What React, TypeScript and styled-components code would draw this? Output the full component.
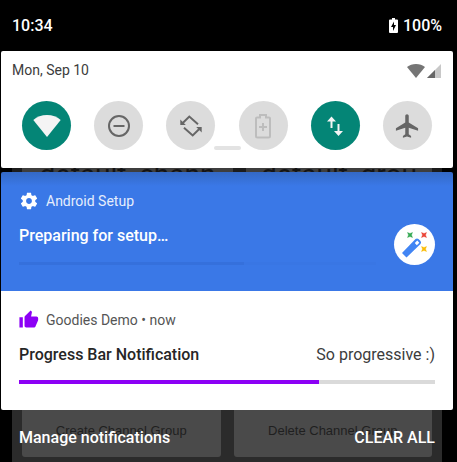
import React from 'react';
import styled, { createGlobalStyle } from 'styled-components';

const GlobalStyle = createGlobalStyle`
  * { box-sizing: border-box; }
  body {
    margin: 0;
    background: #000;
    font-family: Roboto, "Liberation Sans", sans-serif;
  }
  button { font: inherit; border: 0; padding: 0; margin: 0; cursor: pointer; }
  svg { display: block; flex: none; }
`;

const Screen = styled.main`
  display: flex;
  flex-direction: column;
  min-height: 100vh;
  background: #000;
  overflow: hidden;
`;

const StatusBar = styled.header`
  display: flex;
  align-items: center;
  justify-content: space-between;
  height: 51px;
  padding: 0 15px 0 12px;
  color: #fff;
  font-size: 16px;
  font-weight: 500;
  line-height: 20px;
`;

const Battery = styled.div`
  display: flex;
  align-items: center;
  gap: 5px;
`;

const QuickSettings = styled.section`
  position: relative;
  margin: 0 4px 0 1px;
  padding: 10px 21px 18px;
  border-radius: 2px;
  background: #fff;
`;

const DateRow = styled.div`
  display: flex;
  align-items: center;
  justify-content: space-between;
  margin: 0 -9px 22px -10px;
  color: #3c3c3c;
  font-size: 14px;
  line-height: 18px;
`;

const Signals = styled.div`
  display: flex;
  align-items: center;
  gap: 2px;
  padding-top: 2px;
`;

const Tiles = styled.div`
  display: flex;
  justify-content: space-between;
`;

const Tile = styled.button<{ $on?: boolean; $dim?: boolean }>`
  display: flex;
  align-items: center;
  justify-content: center;
  width: 49px;
  height: 49px;
  border-radius: 50%;
  background: ${(p) => (p.$on ? '#048576' : '#dcdcdc')};
  color: ${(p) => (p.$on ? '#f4f4f4' : p.$dim ? '#bdbdbd' : '#666')};
`;

const Handle = styled.div`
  position: absolute;
  left: 50%;
  bottom: 18px;
  width: 27px;
  height: 4px;
  margin-left: -13px;
  border-radius: 2px;
  background: #e3e3e3;
`;

const Backdrop = styled.div`
  display: grid;
  grid-template-columns: 1fr 1fr;
  gap: 13px;
  margin: 0 15px 0 12px;
  padding: 0 10px;
  background: #2b2b2b;
`;

const PeekBackdrop = styled(Backdrop)`
  grid-template-columns: 17fr 15fr;
  height: 4px;
  overflow: hidden;
  background: #1c1c1c;
`;

const PeekLabel = styled.div`
  height: 34px;
  margin-top: -10px;
  background: #3e3e3e;
  color: #141414;
  font-size: 28px;
  line-height: 34px;
  text-align: center;
  white-space: nowrap;
`;

const Notifications = styled.div`
  margin: 0 4px 0 1px;
  border-radius: 2px;
  overflow: hidden;
`;

const SetupCard = styled.section`
  display: flex;
  justify-content: space-between;
  gap: 18px;
  height: 119px;
  padding: 19px 18px 0;
  background: linear-gradient(#3469c5, #3a78e7 14px);
  color: #fff;
`;

const SetupBody = styled.div`
  flex: 1;
  min-width: 0;
`;

const AppLine = styled.div<{ $light?: boolean }>`
  display: flex;
  align-items: center;
  gap: 7px;
  color: ${(p) => (p.$light ? '#e6eefc' : '#555')};
  font-size: 14px;
  line-height: 20px;
`;

const Title = styled.h2`
  margin: 0;
  font-size: 16px;
  font-weight: 500;
  line-height: 20px;
`;

const SetupTitle = styled(Title)`
  margin: 15px 0 16px;
`;

const SetupTrack = styled.div`
  height: 3px;
  background: #3976e4;
`;

const SetupFill = styled.div`
  width: 63%;
  height: 3px;
  background: #3570dc;
`;

const WandBadge = styled.div`
  width: 41px;
  height: 41px;
  margin-top: 33px;
  border-radius: 50%;
  background: #fff;
`;

const ProgressCard = styled.section`
  height: 119px;
  padding: 19px 18px 0;
  background: #fff;
`;

const TitleRow = styled.div`
  display: flex;
  justify-content: space-between;
  margin: 15px 0;
  color: #262626;
`;

const Detail = styled.span`
  color: #3c3c3c;
  font-size: 16px;
  line-height: 20px;
`;

const Progress = styled.div`
  height: 4px;
  background: #dadada;
`;

const ProgressFill = styled.div`
  height: 4px;
  background: #8c00f5;
`;

const Footer = styled.footer`
  position: relative;
  flex: 1;
  display: flex;
  flex-direction: column;
`;

const FooterBackdrop = styled(Backdrop)`
  flex: 1;
  align-items: start;
`;

const BackdropButton = styled.button`
  height: 47px;
  padding-bottom: 6px;
  border-radius: 0 0 3px 3px;
  background: #4a4a4a;
  color: #1f1f1f;
  font-family: "Liberation Sans", Arial, sans-serif;
  font-size: 13px;
`;

const FooterActions = styled.div`
  position: absolute;
  top: 18px;
  left: 19px;
  right: 22px;
  display: flex;
  justify-content: space-between;
`;

const FooterAction = styled.button`
  background: none;
  color: #fff;
  font-size: 16px;
  font-weight: 500;
  line-height: 20px;
`;

const WifiIcon = () => (
  <svg width="28" height="22" viewBox="0 0 28 22" fill="currentColor">
    <path d="M14 22 0.3 4.9C4 1.9 8.700 0 14 0s10 1.900 13.700 4.900z" />
  </svg>
);

const DoNotDisturbIcon = () => (
  <svg width="24" height="24" viewBox="0 0 24 24" fill="none" stroke="currentColor" strokeWidth="2">
    <circle cx="12" cy="12" r="10" />
    <path d="M6.500 12h11" />
  </svg>
);

const RotateIcon = () => (
  <svg width="24" height="24" viewBox="0 0 24 24" fill="none" stroke="currentColor" strokeWidth="2">
    <path d="m19 10.300-8.700-7.700-6.300 6.200M5 13.700l8.700 7.700 6.300-6.200" />
    <path d="M1.300 5.500v5.500h5.500zM22.700 18.500v-5.500h-5.500z" fill="currentColor" stroke="none" />
  </svg>
);

const BatterySaverIcon = () => (
  <svg width="16" height="26" viewBox="0 0 16 26" fill="none" stroke="currentColor" strokeWidth="2">
    <path d="M2 4.500h3V2h6v2.500h3q1 0 1 1V23q0 1.500-1.500 1.500h-11Q1 24.500 1 23V5.500q0-1 1-1z" />
    <path d="M8 10v8M4 14h8" />
  </svg>
);

const DataIcon = () => (
  <svg width="18" height="22" viewBox="0 0 18 22" fill="none" stroke="currentColor" strokeWidth="2">
    <path d="M5.500 13V4M12.500 9v9" />
    <path d="M1 6.500 5.500 1.500 10 6.500zM8 16l4.500 5 4.500-5z" fill="currentColor" stroke="none" />
  </svg>
);

const PlaneIcon = () => (
  <svg width="28" height="28" viewBox="-0.500 0 24 24" fill="currentColor">
    <path d="M21 16v-2l-8-5V3.500c0-.83-.67-1.500-1.500-1.500S10 2.670 10 3.500V9l-8 5v2l8-2.500V19l-2 1.500V22l3.500-1 3.500 1v-1.500L13 19v-5.500l8 2.500z" />
  </svg>
);

const SmallWifiIcon = () => (
  <svg width="18" height="14" viewBox="0 0 18 14" fill="#757575">
    <path d="M9 14 0 3c2.500-2 5.500-3 9-3s6.500 1 9 3z" />
  </svg>
);

const CellIcon = () => (
  <svg width="14" height="14" viewBox="0 0 14 14">
    <path d="M0 14 14 0v14z" fill="#c8c8c8" />
    <path d="M0 14 8 6v8z" fill="#666" />
  </svg>
);

const ChargingIcon = () => (
  <svg width="9" height="15" viewBox="0 0 9 15">
    <path d="M3 0h3v1.500h2q1 0 1 1V14q0 1-1 1H1q-1 0-1-1V2.500q0-1 1-1h2z" fill="#fff" />
    <path d="M5 3.500 2 9h2v4l3-6H5z" fill="#000" />
  </svg>
);

const GearIcon = () => (
  <svg width="20" height="20" viewBox="0 0 24 24" fill="#fff">
    <path d="M19.430 12.980c.04-.32.07-.64.07-.98s-.03-.66-.07-.98l2.110-1.650c.19-.15.24-.42.12-.64l-2-3.460c-.12-.22-.39-.3-.61-.22l-2.490 1c-.52-.4-1.080-.73-1.690-.98l-.38-2.650C14.460 2.180 14.250 2 14 2h-4c-.25 0-.46.18-.49.42l-.38 2.650c-.61.25-1.170.59-1.690.98l-2.490-1c-.23-.09-.49 0-.61.22l-2 3.460c-.13.22-.07.49.12.64l2.110 1.650c-.04.32-.07.65-.07.98s.03.66.07.98l-2.110 1.650c-.19.15-.24.42-.12.64l2 3.460c.12.22.39.3.61.22l2.490-1c.52.4 1.080.73 1.690.98l.38 2.650c.03.24.24.42.49.42h4c.25 0 .46-.18.49-.42l.38-2.650c.61-.25 1.170-.59 1.690-.98l2.490 1c.23.09.49 0 .61-.22l2-3.460c.12-.22.07-.49-.12-.64l-2.110-1.650zM12 15.500c-1.930 0-3.500-1.570-3.500-3.500s1.570-3.500 3.500-3.500 3.500 1.570 3.500 3.500-1.570 3.500-3.500 3.500z" />
  </svg>
);

const ThumbIcon = () => (
  <svg width="20" height="20" viewBox="0.500 0.500 23.500 23.500" fill="#8c00f5">
    <path d="M1 21h4V9H1v12zm22-11c0-1.100-.9-2-2-2h-6.310l.95-4.570.03-.32c0-.41-.17-.79-.44-1.060L14.170 1 7.590 7.590C7.220 7.950 7 8.450 7 9v10c0 1.100.9 2 2 2h9c.83 0 1.540-.5 1.840-1.220l3.020-7.050c.09-.23.14-.47.14-.73v-2z" />
  </svg>
);

const Spark = ({ x, y, color }: { x: number; y: number; color: string }) => (
  <path
    d={`M${x - 2.5} ${y - 2.5}l2.500 1 2.500-1-1 2.500 1 2.500-2.500-1-2.500 1 1-2.500z`}
    fill={color}
    stroke={color}
    strokeWidth="0.400"
  />
);

const WandIcon = () => (
  <svg width="41" height="41" viewBox="0 0 41 41">
    <path
      fillRule="evenodd"
      d="M8 29 21.500 15q1.500-1.200 3 0l2 2q1.200 1.500 0 3L12.500 33.500zM23.300 16.500 20.800 19l2 2.200 2.500-2.500z"
      fill="#4285f4"
    />
    <Spark x={16} y={11} color="#34a853" />
    <Spark x={30} y={11} color="#ea4335" />
    <Spark x={30} y={25} color="#fbbc05" />
  </svg>
);

const progress = 72;

export default function App() {
  return (
    <Screen>
      <GlobalStyle />
      <StatusBar>
        <span>10:34</span>
        <Battery>
          <ChargingIcon />
          <span>100%</span>
        </Battery>
      </StatusBar>

      <QuickSettings>
        <DateRow>
          <span>Mon, Sep 10</span>
          <Signals>
            <SmallWifiIcon />
            <CellIcon />
          </Signals>
        </DateRow>
        <Tiles>
          <Tile $on aria-label="Wi-Fi"><WifiIcon /></Tile>
          <Tile aria-label="Do not disturb"><DoNotDisturbIcon /></Tile>
          <Tile aria-label="Auto-rotate"><RotateIcon /></Tile>
          <Tile $dim aria-label="Battery saver"><BatterySaverIcon /></Tile>
          <Tile $on aria-label="Mobile data"><DataIcon /></Tile>
          <Tile aria-label="Airplane mode"><PlaneIcon /></Tile>
        </Tiles>
        <Handle />
      </QuickSettings>

      <PeekBackdrop>
        <PeekLabel>default_chann</PeekLabel>
        <PeekLabel>default_grou</PeekLabel>
      </PeekBackdrop>

      <Notifications>
        <SetupCard>
          <SetupBody>
            <AppLine $light>
              <GearIcon />
              <span>Android Setup</span>
            </AppLine>
            <SetupTitle>Preparing for setup…</SetupTitle>
            <SetupTrack>
              <SetupFill />
            </SetupTrack>
          </SetupBody>
          <WandBadge><WandIcon /></WandBadge>
        </SetupCard>
        <ProgressCard>
          <AppLine>
            <ThumbIcon />
            <span>Goodies Demo • now</span>
          </AppLine>
          <TitleRow>
            <Title>Progress Bar Notification</Title>
            <Detail>So progressive :)</Detail>
          </TitleRow>
          <Progress role="progressbar" aria-label="Progress" aria-valuenow={progress}>
            <ProgressFill style={{ width: `${progress}%` }} />
          </Progress>
        </ProgressCard>
      </Notifications>

      <Footer>
        <FooterBackdrop>
          <BackdropButton>Create Channel Group</BackdropButton>
          <BackdropButton>Delete Channel Group</BackdropButton>
        </FooterBackdrop>
        <FooterActions>
          <FooterAction>Manage notifications</FooterAction>
          <FooterAction>CLEAR ALL</FooterAction>
        </FooterActions>
      </Footer>
    </Screen>
  );
}
